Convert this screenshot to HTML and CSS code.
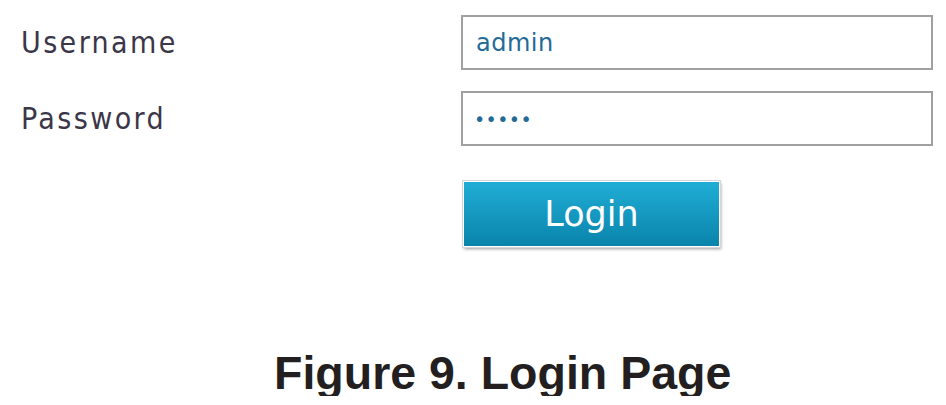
FILE: index.html
```html
<!DOCTYPE html>
<html lang="en">

<head>
  <meta charset="UTF-8">
  <title>Login Page</title>
  <link rel="stylesheet" href="styles.css">
</head>

<body>
  <form action="" id="login-form" class="login">
    <label for="username" class="login-label">Username</label>
    <input type="text" id="username" name="username" class="login-input" value="admin" />

    <label for="password" class="login-label">Password</label>
    <input type="password" id="password" name="password" class="login-input login-password" value="admin" />

    <div class="login-actions">
      <button type="submit" class="login-button">Login</button>
    </div>
  </form>

  <p class="caption">Figure 9. Login Page</p>
</body>

</html>
```

FILE: styles.css
```css
body {
  margin: 0;
  background: #fff;
}

.login {
  display: grid;
  grid-template-columns: 439px 472px;
  row-gap: 21px;
  padding: 15px 0 0 21px;
}

.login-label {
  align-self: center;
  font-family: "DejaVu Sans Condensed", "DejaVu Sans", sans-serif;
  font-size: 30px;
  letter-spacing: 2.4px;
  color: #3b3648;
}

.login-input {
  box-sizing: border-box;
  width: 472px;
  height: 55px;
  margin: 0 0 0 1px;
  padding: 0 0 0 13px;
  border: 2px solid #a0a0a0;
  border-radius: 0;
  outline: none;
  font-family: "DejaVu Sans", sans-serif;
  font-size: 24px;
  letter-spacing: 0.5px;
  color: #236a97;
  background: #fff;
}

.login-password {
  padding-left: 11px;
  font-size: 19px;
  letter-spacing: 0.4px;
}

.login-actions {
  grid-column: 2;
  padding: 14px 0 0 3px;
}

.login-button {
  box-sizing: border-box;
  width: 257px;
  height: 66px;
  border: 1px solid #fff;
  border-radius: 0;
  background: linear-gradient(to bottom, #20add5, #0a84ab);
  box-shadow: 0 0 0 1px #d6d6d6, 1px 2px 3px rgba(0, 0, 0, 0.4);
  font-family: "DejaVu Sans", sans-serif;
  font-size: 35px;
  color: #fff;
  cursor: pointer;
}

.caption {
  margin: 103px 0 0 274px;
  font-family: "Liberation Sans", Arial, sans-serif;
  font-weight: bold;
  font-size: 46.5px;
  line-height: 46px;
  color: #231f20;
}
```
